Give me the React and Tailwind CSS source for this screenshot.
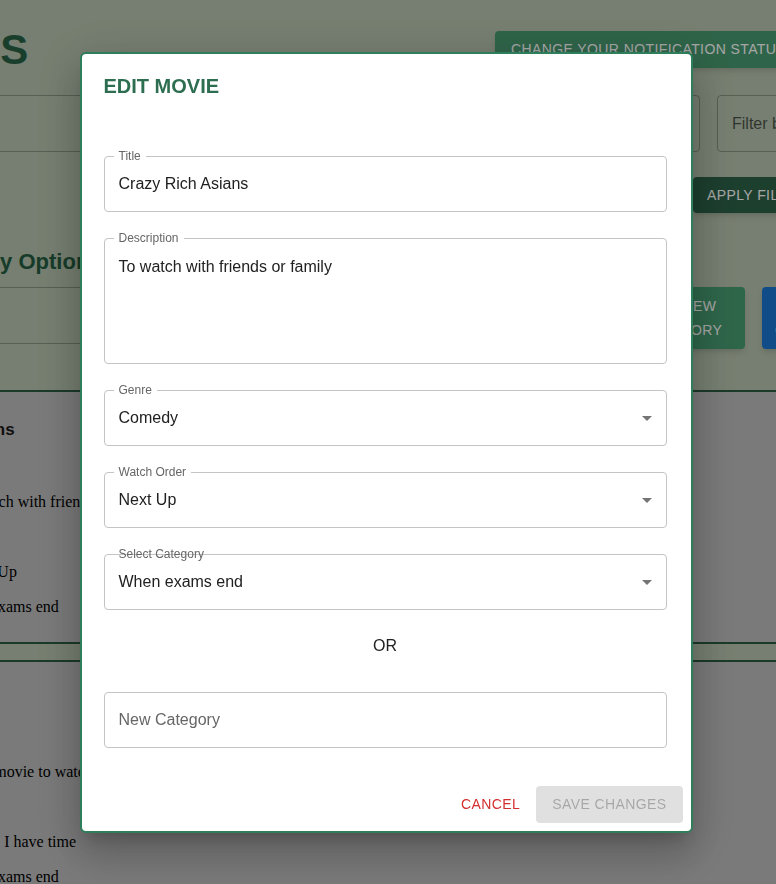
import React from "react";

const sans = "font-['Liberation_Sans',Arial,sans-serif]";
const serif = "font-['Liberation_Serif','Times_New_Roman',serif]";

const MOVIES = [
  {
    title: "Crazy Rich Asians",
    lines: [
      "Genre: Comedy",
      "Description: To watch with friends or family",
      "Rating: 4/5",
      "Watch Order: Next Up",
      "Categories: When exams end",
    ],
  },
  {
    title: "The Intern",
    lines: [
      "Genre: Romance",
      "Description: A fun movie to watch on a lazy Sunday",
      "Rating: 5/5",
      "Watch Order: When I have time",
      "Categories: When exams end",
    ],
  },
];

function ArrowDrop() {
  return (
    <svg
      viewBox="0 0 24 24"
      className="absolute right-[7px] top-1/2 h-6 w-6 -translate-y-1/2 fill-[#757575]"
    >
      <path d="M7 10l5 5 5-5z" />
    </svg>
  );
}

function Field({ label, value, placeholder, select, tall, overlapLabel }) {
  return (
    <div
      className={`relative rounded border border-[#c4c4c4] ${tall ? "h-[126px]" : "h-14"}`}
    >
      {label && (
        <span
          className={`absolute -top-[7px] left-[9px] px-[5px] text-[12px] leading-[12px] text-[#666] ${
            overlapLabel ? "" : "bg-white"
          }`}
        >
          {label}
        </span>
      )}
      <div
        className={`px-[14px] text-[16px] ${
          tall ? "pt-[16px] leading-[23px]" : "flex h-full items-center"
        } ${value ? "text-[#212121]" : "text-[#666]"}`}
      >
        {value || placeholder}
      </div>
      {select && <ArrowDrop />}
    </div>
  );
}

function MovieCard({ movie, className = "" }) {
  return (
    <article className={`border-y-2 border-[#2a593e] bg-[#bcbcbc] pb-[26px] pt-[26px] ${className}`}>
      <div className="-ml-[128px] whitespace-nowrap">
        <h3 className={`${sans} -ml-[5px] text-[17px] font-bold leading-6 text-[#1a1a1a]`}>
          {movie.title}
        </h3>
        <div className={`${serif} mt-4 flex flex-col gap-[17px] text-[16px] leading-[18px] text-black`}>
          {movie.lines.map((line) => (
            <p key={line}>{line}</p>
          ))}
        </div>
      </div>
    </article>
  );
}

export default function App() {
  return (
    <div className={`relative h-[884px] overflow-hidden bg-[#b6c3ae] ${sans}`}>
      {/* page behind the dialog */}
      <section className="flex h-[390px] flex-col">
        <div className="mt-[31px] flex h-[37px] items-center">
          <h1 className="-ml-[135px] w-[630px] shrink-0 whitespace-nowrap text-[42px] font-bold leading-none text-[#276244]">
            MOVIES
          </h1>
          <button className="flex h-[37px] w-[320px] shrink-0 items-center whitespace-nowrap rounded bg-[#489a70] px-4 text-[14px] uppercase tracking-[0.4px] text-white shadow-md">
            Change your notification status
          </button>
        </div>

        <div className="mt-[27px] flex h-[57px] gap-[17px]">
          <div className="-ml-[20px] w-[720px] shrink-0 rounded border border-black/25" />
          <div className="flex w-[240px] shrink-0 items-center whitespace-nowrap rounded border border-black/25 px-[14px] text-[16px] text-black/60">
            Filter by Genre
          </div>
        </div>

        <div className="mt-[25px] flex h-9">
          <button className="ml-[693px] flex w-[200px] shrink-0 items-center whitespace-nowrap rounded bg-[#2c6148] px-[14px] text-[14px] uppercase tracking-[0.4px] text-white shadow-md">
            Apply filters
          </button>
        </div>

        <h2 className="-ml-[83px] mt-[36px] whitespace-nowrap text-[22px] font-bold leading-[26px] text-[#235c3f]">
          Category Options
        </h2>

        <div className="mt-3 flex items-start">
          <div className="-ml-[20px] h-[57px] w-[620px] shrink-0 rounded border border-black/25" />
          <button className="ml-[19px] flex h-[62px] w-[126px] shrink-0 items-center justify-center rounded bg-[#479d72] px-4 text-center text-[14px] uppercase leading-[24.5px] tracking-[0.4px] text-white shadow-md">
            Add new category
          </button>
          <button className="ml-[17px] flex h-[62px] w-[140px] shrink-0 items-center justify-start rounded bg-[#1976d2] px-[13px] text-left text-[14px] uppercase leading-[24.5px] tracking-[0.4px] text-white shadow-md">
            <span>
              <span className="block pl-[14px]">Delete</span>
              <span className="block">Category</span>
            </span>
          </button>
        </div>
      </section>

      <MovieCard movie={MOVIES[0]} />
      <MovieCard movie={MOVIES[1]} className="mt-4" />

      {/* backdrop + dialog */}
      <div className="fixed inset-0 flex items-center justify-center bg-black/35 pr-[4px]">
        <div className="w-[613px] rounded-md border-2 border-[#2e7d5b] bg-white shadow-[0_11px_15px_-7px_rgba(0,0,0,0.2),0_24px_38px_3px_rgba(0,0,0,0.14),0_9px_46px_8px_rgba(0,0,0,0.12)]">
          <h2 className="pl-[22px] pt-[16px] text-[20px] font-bold leading-8 text-[#2d6d50]">
            EDIT MOVIE
          </h2>

          <div className="flex flex-col pb-[30px] pl-[22px] pr-[24px] pt-[54px]">
            <div className="flex flex-col gap-[26px]">
              <Field label="Title" value="Crazy Rich Asians" />
              <Field label="Description" value="To watch with friends or family" tall />
              <Field label="Genre" value="Comedy" select />
              <Field label="Watch Order" value="Next Up" select />
              <Field label="Select Category" value="When exams end" select overlapLabel />
            </div>
            <p className="mt-6 text-center text-[16px] leading-6 text-[#212121]">OR</p>
            <div className="mt-[34px]">
              <Field placeholder="New Category" />
            </div>
          </div>

          <div className="flex justify-end gap-2 p-2">
            <button className="h-[37px] rounded px-2 text-[14px] uppercase tracking-[0.4px] text-[#d32f2f]">
              Cancel
            </button>
            <button
              disabled
              className="h-[37px] rounded bg-black/[0.12] px-4 text-[14px] uppercase tracking-[0.4px] text-black/[0.26]"
            >
              Save changes
            </button>
          </div>
        </div>
      </div>
    </div>
  );
}
